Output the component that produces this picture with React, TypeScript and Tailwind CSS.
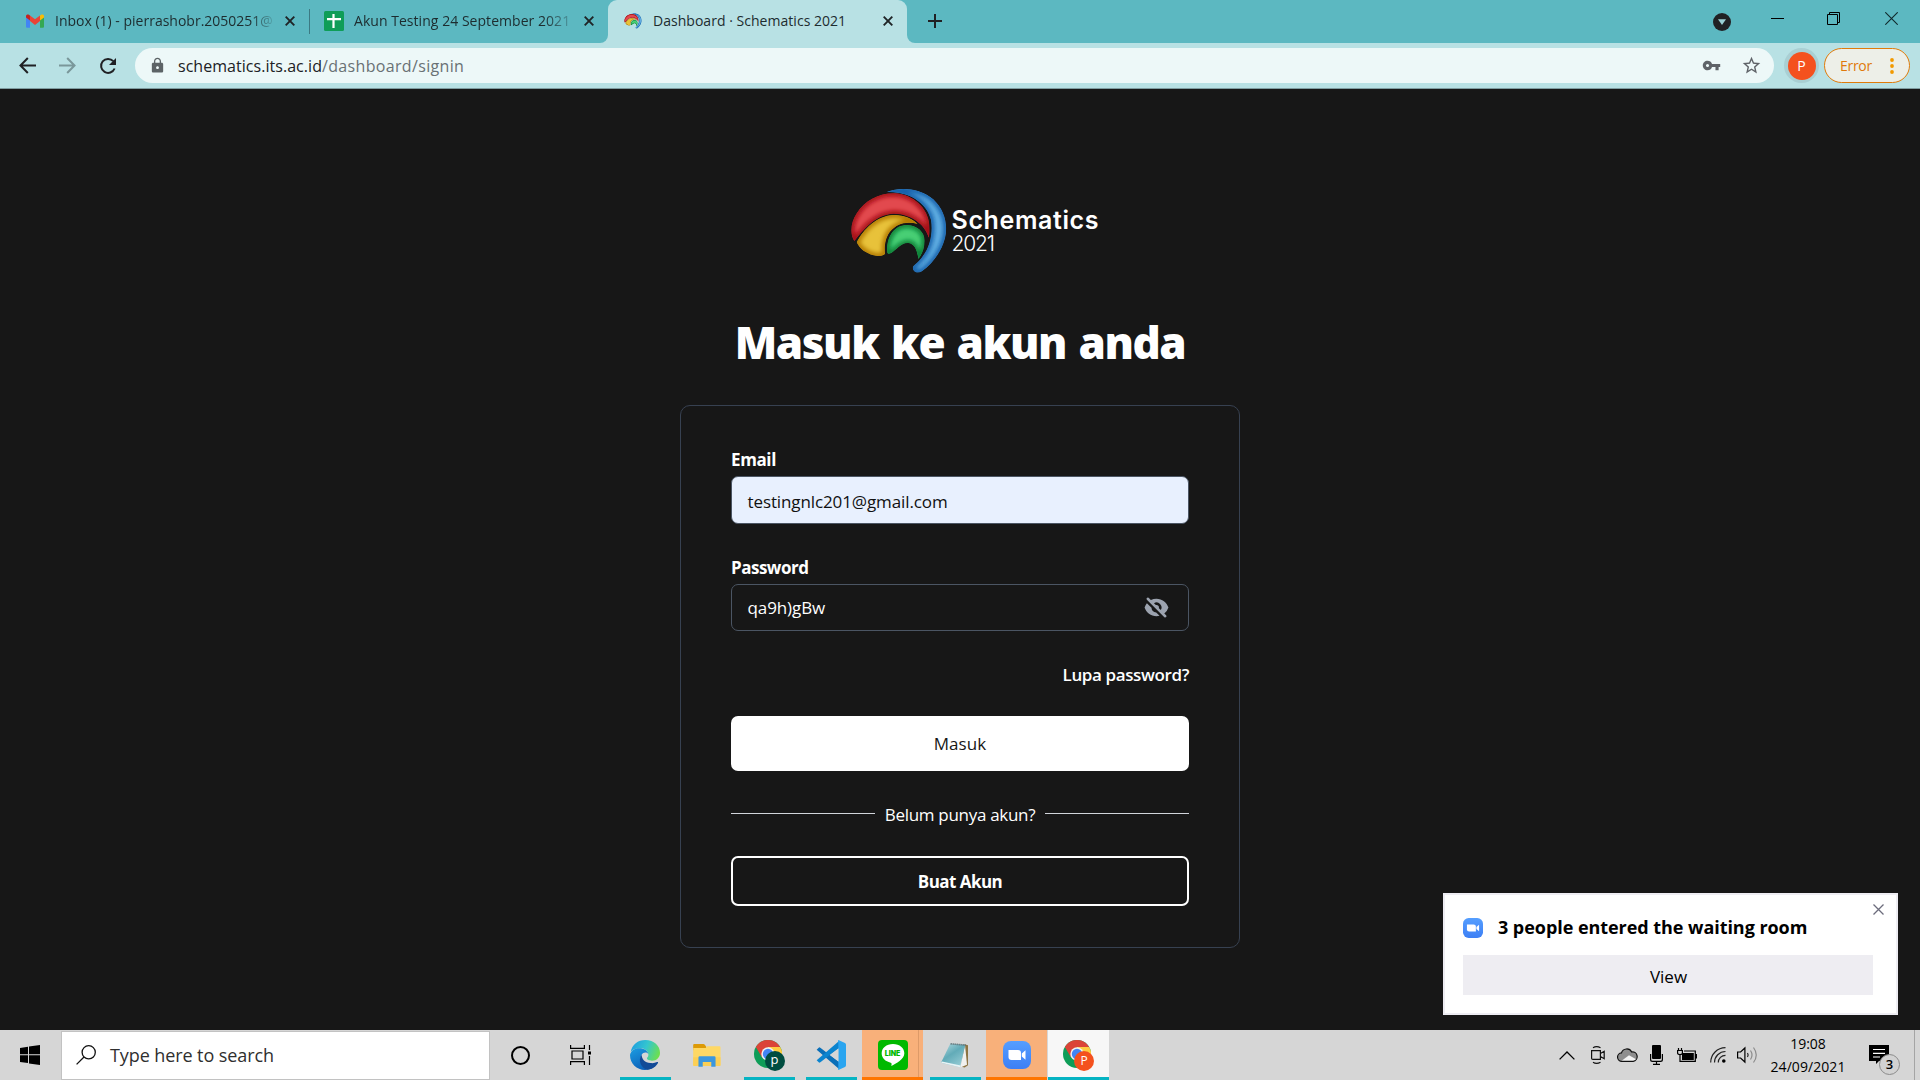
import React from "react";
import { HiEyeOff } from "react-icons/hi";
import { MdLock, MdStarBorder, MdVpnKey } from "react-icons/md";

function SchematicsMark({ id, className }: { id: string; className: string }) {
  const parts = [
    {
      key: "blue",
      light: "#62ade2",
      dark: "#1262ac",
      d: "M170 66C208 50 272 53 310 88C344 120 355 165 345 205C335 245 306 283 276 304C262 313 246 305 249 291C252 283 265 278 277 260C300 232 309 190 303 150C293 108 250 64 170 66Z",
    },
    {
      key: "red",
      light: "#e2494e",
      dark: "#a30a12",
      d: "M73 213C60 195 60 160 80 130C105 90 150 68 195 70C250 73 295 115 298 165C299 180 299 195 296 203C288 168 245 130 190 131C138 135 108 170 73 213Z",
    },
    {
      key: "yellow",
      light: "#e8c23a",
      dark: "#b37a06",
      d: "M80 217C100 178 140 137 190 135C220 134 248 146 263 162C230 152 200 161 180 185C165 205 163 230 165 251C161 258 145 260 130 256C108 250 90 238 80 217Z",
    },
    {
      key: "green",
      light: "#48cf75",
      dark: "#0c8237",
      d: "M172 248C168 215 182 170 225 165C260 163 284 185 284 212C284 235 275 255 265 267C262 245 255 221 235 219C212 218 200 240 182 250C177 252 173 251 172 248Z",
    },
  ];
  return (
    <svg viewBox="60 52 294 262" className={className}>
      <defs>
        <filter id={`${id}-soft`} x="-20%" y="-20%" width="140%" height="140%">
          <feGaussianBlur stdDeviation="6" />
        </filter>
        {parts.map((p) => (
          <clipPath key={p.key} id={`${id}-${p.key}`}>
            <path d={p.d} />
          </clipPath>
        ))}
      </defs>
      {parts.map((p) => (
        <g key={p.key} clipPath={`url(#${id}-${p.key})`}>
          <path d={p.d} fill={p.light} />
          <path d={p.d} fill="none" stroke={p.dark} strokeWidth="18" filter={`url(#${id}-soft)`} />
        </g>
      ))}
    </svg>
  );
}

function GmailIcon() {
  return (
    <svg viewBox="0 0 18 14" className="h-3.5 w-[18px] shrink-0">
      <path d="M0 3v9.5c0 .8.6 1.3 1.3 1.3H4V5.5z" fill="#4285f4" />
      <path d="M18 3v9.5c0 .8-.6 1.3-1.3 1.3H14V5.5z" fill="#34a853" />
      <path d="M4 1.5v5.6l5 3.8 5-3.8V1.5L9 5.3z" fill="#ea4335" />
      <path d="M0 2v1.4l4 3.2V1.5l-.8-.6C1.800-.2 0 .6 0 2z" fill="#c5221f" />
      <path d="M18 2v1.400l-4 3.200V1.500l.8-.6C16.200-.2 18 .6 18 2z" fill="#fbbc04" />
    </svg>
  );
}

function SheetIcon() {
  return (
    <svg viewBox="0 0 20 20" className="size-5 shrink-0">
      <rect width="20" height="20" rx="1.5" fill="#0f9d58" />
      <path d="M9.500 3v14M3 8.200h14" stroke="#fff" strokeWidth="2.200" />
    </svg>
  );
}

function CloseX({ className }: { className: string }) {
  return (
    <svg viewBox="0 0 10 10" className={className}>
      <path d="M.7.7l8.600 8.600M9.300.7L.7 9.300" stroke="currentColor" strokeWidth="1.900" />
    </svg>
  );
}

function TabStrip() {
  return (
    <div className="flex h-[43px] bg-[#5cb8c1] text-sm text-[#1d2c2f]">
      <div className="flex w-[309px] items-center pb-0.5 pl-[26px]">
        <GmailIcon />
        <span className="ml-[11px] w-[221px] whitespace-nowrap [mask-image:linear-gradient(to_right,black_195px,transparent_222px)]">
          Inbox (1) - pierrashobr.2050251@
        </span>
        <CloseX className="ml-[9px] size-2.5 shrink-0 text-[#1f2426]" />
      </div>
      <div className="mt-[9px] h-[25px] w-px bg-[#3c7a83]" />
      <div className="flex w-[290px] items-center pb-0.5 pl-3.5">
        <SheetIcon />
        <span className="ml-2.5 w-[219px] whitespace-nowrap tracking-[0.04px] [mask-image:linear-gradient(to_right,black_190px,transparent_224px)]">
          Akun Testing 24 September 2021
        </span>
        <CloseX className="ml-[11px] size-2.5 shrink-0 text-[#1f2426]" />
      </div>
      <div className="size-2 self-end bg-[#b8e1e4]">
        <div className="size-full rounded-br-lg bg-[#5cb8c1]" />
      </div>
      <div className="flex w-[299px] items-center rounded-t-[9px] bg-[#b8e1e4] pb-0.5 pl-4">
        <SchematicsMark id="tab" className="h-4 w-[18px] shrink-0" />
        <span className="ml-[11px] w-[230px] whitespace-nowrap tracking-[0.03px]">Dashboard · Schematics 2021</span>
        <CloseX className="size-2.5 shrink-0 text-[#1f2426]" />
      </div>
      <div className="size-2 self-end bg-[#b8e1e4]">
        <div className="size-full rounded-bl-lg bg-[#5cb8c1]" />
      </div>
      <svg viewBox="0 0 14 14" className="mt-3.5 ml-[13px] size-3.5 text-[#202124]">
        <path d="M7 0v14M0 7h14" stroke="currentColor" strokeWidth="2" />
      </svg>
      <div className="ml-auto flex pr-[22px]">
        <svg viewBox="0 0 18 18" className="mt-[13px] size-[18px]">
          <circle cx="9" cy="9" r="9" fill="#202124" />
          <path d="M5 6.200h8L9 12z" fill="#9ad0d5" />
        </svg>
        <div className="mt-[18px] ml-10 h-px w-[13px] bg-black" />
        <svg viewBox="0 0 13 13" className="mt-3 ml-[43px] size-[13px]">
          <path d="M.5 2.500h10v10H.5zM2.500 2.500v-2h10v10h-2" fill="none" stroke="#000" />
        </svg>
        <svg viewBox="0 0 13 13" className="mt-3 ml-[45px] size-[13px]">
          <path d="M.3.3l12.400 12.400M12.700.3L.3 12.700" stroke="#10292c" strokeWidth="1.100" />
        </svg>
      </div>
    </div>
  );
}

function Toolbar() {
  return (
    <div className="flex h-[46px] items-center border-b border-[#7f9da1] bg-[#b8e1e4]">
      <svg viewBox="0 0 16 16" className="ml-[19px] size-[17px] text-[#202124]">
        <path d="M16 8H1.500M8.300 1L1.400 8l6.900 7" fill="none" stroke="currentColor" strokeWidth="1.900" />
      </svg>
      <svg viewBox="0 0 16 16" className="ml-[23px] size-[17px] text-[#7a979a]">
        <path d="M0 8h14.500M7.700 1l6.900 7-6.900 7" fill="none" stroke="currentColor" strokeWidth="1.900" />
      </svg>
      <svg viewBox="0 0 18 18" className="ml-[23px] size-[18px] text-[#202124]">
        <path d="M15.600 11.500A7 7 0 1 1 14.300 4.200" fill="none" stroke="currentColor" strokeWidth="2" />
        <path d="M17 1v7h-7z" fill="currentColor" />
      </svg>
      <div className="ml-[18px] flex h-[35px] w-[1639px] items-center rounded-full bg-[#edf8f8] pl-3.5">
        <MdLock className="size-[17px] text-[#5c6366]" />
        <div className="ml-3 whitespace-nowrap">
          <span className="tracking-[0.04px] text-[#202124]">schematics.its.ac.id</span>
          <span className="tracking-[0.34px] text-[#697174]">/dashboard/signin</span>
        </div>
        <MdVpnKey className="ml-auto size-[19px] text-[#5f6368]" />
        <MdStarBorder className="mr-3 ml-5 size-[21px] text-[#5f6368]" />
      </div>
      <div className="ml-2.5 flex size-[35px] items-center justify-center rounded-full bg-[#a9cfd3]">
        <div className="flex size-7 items-center justify-center rounded-full bg-[#f4511e] text-sm text-white">P</div>
      </div>
      <div className="ml-[5px] flex h-[35px] w-[86px] items-center rounded-full border-[1.5px] border-[#e07b0a] bg-[#edefe8] pl-[15px] text-sm tracking-[-0.3px] text-[#e0790b]">
        Error
        <svg viewBox="0 0 4 16" className="ml-[18px] h-4 w-1">
          <circle cx="2" cy="2" r="1.900" fill="#f29900" />
          <circle cx="2" cy="8" r="1.900" fill="#f29900" />
          <circle cx="2" cy="14" r="1.900" fill="#f29900" />
        </svg>
      </div>
    </div>
  );
}

function SignIn() {
  return (
    <main className="flex h-[941px] flex-col items-center bg-[#171717] text-[17px] text-white">
      <div className="mt-[98px] ml-[30px] flex h-[88px] w-[250px]">
        <SchematicsMark id="logo" className="h-[88px] w-[98px] shrink-0" />
        <div className="ml-[3.5px] flex flex-col pt-5 font-['Inter']">
          <span className="text-[25px] leading-[26px] font-semibold tracking-[0.62px]">Schematics</span>
          <span className="text-[21px] leading-[22px] font-light tracking-[-1.2px]">2021</span>
        </div>
      </div>
      <h1 className="mt-[37px] text-[44px] leading-[60px] font-extrabold tracking-[-1.45px] [word-spacing:2.3px]">
        Masuk ke akun anda
      </h1>
      <section className="mt-[33px] h-[543px] w-[560px] rounded-[10px] border border-[#374151] px-[50px] pt-10">
        <label className="block h-[26px] pt-px leading-[26px] font-bold tracking-[-0.37px]">Email</label>
        <div className="mt-1 flex h-12 items-center rounded-[7px] border border-[#4b5563] bg-[#e8f0fe] pt-[3px] pl-[15.5px] tracking-[-0.11px] text-[#111]">
          testingnlc201@gmail.com
        </div>
        <label className="mt-[30px] block h-[27px] leading-[27px] font-bold tracking-[-0.5px]">Password</label>
        <div className="mt-[3px] flex h-[47px] items-center justify-between rounded-[7px] border border-[#4b5563] pr-[19px] pl-[15.5px]">
          <span className="pt-px tracking-[-0.1px]">qa9h)gBw</span>
          <HiEyeOff className="size-[25px] text-[#9ca3af]" />
        </div>
        <a className="mt-[30px] block h-[27px] text-right leading-[27px] font-semibold tracking-[-0.38px]">Lupa password?</a>
        <button className="mt-7 block h-[55px] w-full rounded-[7px] bg-white pt-px font-medium tracking-[0.1px] text-[#171717]">
          Masuk
        </button>
        <div className="mt-[29px] flex h-[26px] items-center gap-2.5 tracking-[-0.31px]">
          <div className="h-px flex-1 bg-[#d1d5db]" />
          <span className="pt-1 leading-[26px]">Belum punya akun?</span>
          <div className="h-px flex-1 bg-[#d1d5db]" />
        </div>
        <button className="mt-[30px] block h-[50px] w-full rounded-[7px] border-2 border-white pt-0.5 font-bold tracking-[-0.55px]">
          Buat Akun
        </button>
      </section>
    </main>
  );
}

function ZoomIcon({ id, className }: { id: string; className: string }) {
  return (
    <svg viewBox="0 0 28 28" className={className}>
      <defs>
        <linearGradient id={id} x1="0" y1="0" x2="0" y2="1">
          <stop offset="0" stopColor="#559eff" />
          <stop offset="1" stopColor="#3d7ff5" />
        </linearGradient>
      </defs>
      <rect width="28" height="28" rx="8" fill={`url(#${id})`} />
      <path d="M5.500 9h9.500a3 3 0 0 1 3 3v7H8.500a3 3 0 0 1-3-3z" fill="#fff" />
      <path d="M18.800 12.500l3.700-3.200v9.400l-3.700-3.200z" fill="#fff" />
    </svg>
  );
}

function ZoomToast() {
  return (
    <aside className="absolute top-[893px] left-[1443px] h-[122px] w-[455px] border-2 border-[#eeedf3] bg-white px-[18px] text-black">
      <svg viewBox="0 0 11 11" className="absolute top-[8.5px] right-3 size-[11px]">
        <path d="M.5.500l10 10M10.500.5l-10 10" stroke="#6c6c7c" strokeWidth="1.300" />
      </svg>
      <div className="mt-[19px] flex h-7 items-center">
        <ZoomIcon id="zoom-toast" className="size-5" />
        <span className="ml-[15px] pb-0.5 text-lg leading-[26px] font-bold tracking-[-0.05px]">
          3 people entered the waiting room
        </span>
      </div>
      <button className="mt-[13px] block h-10 w-[410px] bg-[#eeedf2] pt-[3px] pl-px text-[17px]">View</button>
    </aside>
  );
}

function EdgeIcon() {
  return (
    <svg viewBox="0 0 90 90" className="size-[30px]">
      <defs>
        <linearGradient id="edge-top" x1="0" y1="0.300" x2="1" y2="0.600">
          <stop offset="0" stopColor="#1f9fe0" />
          <stop offset=".5" stopColor="#34c6cf" />
          <stop offset="1" stopColor="#6ee04c" />
        </linearGradient>
        <linearGradient id="edge-left" x1="0" y1="0" x2=".6" y2="1">
          <stop offset="0" stopColor="#1b9de2" />
          <stop offset="1" stopColor="#0b5cb5" />
        </linearGradient>
      </defs>
      <path d="M2 36C6 14 24 0 46 0c26 0 44 18 44 38 0 14-10 24-24 24-10 0-16-4-15-8 2-3 5-6 4-12C53 30 40 24 27 25 14 26 6 31 2 36z" fill="url(#edge-top)" />
      <path d="M0 45C2 33 14 25 28 25c14 0 25 7 27 17-5-6-15-6-20 2-6 10-2 24 9 32 10 7 24 6 34 0C70 85 58 90 45 90 20 90 0 71 0 45z" fill="url(#edge-left)" />
      <path d="M35 44c-6 8-7 18-3 28 4 9 12 16 20 17 14-1 26-9 32-20 1-3-1-4-3-3-6 3-12 4-20 3-16-1-26-12-26-25z" fill="#124a97" />
    </svg>
  );
}

function FolderIcon() {
  return (
    <svg viewBox="0 0 84 70" className="h-[23px] w-7">
      <path d="M0 3q0-3 3-3h28q3 0 5 3l4 6v10H0z" fill="#dd9a06" />
      <path d="M0 12h38l4-5h38q3 0 3 3v54q0 3-3 3H3q-3 0-3-3z" fill="#fed865" />
      <path d="M0 40h83v24q0 3-3 3H3q-3 0-3-3z" fill="#fccf55" />
      <path d="M16 69V41q0-4 4-4h44q4 0 4 4v28H55V55H29v14z" fill="#3c97de" />
    </svg>
  );
}

function ChromeIcon({ letter, badge }: { letter: string; badge: "green" | "orange" }) {
  return (
    <div className="relative h-8 w-[31px]">
      <svg viewBox="0 0 84 84" className="mt-px size-7">
        <circle cx="42" cy="42" r="42" fill="#0f9d58" />
        <path d="M42 84A42 42 0 0 0 78.400 21H42z" fill="#ffcd40" />
        <path d="M42 21h36.400A42 42 0 0 0 5.600 21l18 31z" fill="#db4437" />
        <circle cx="42" cy="42" r="20" fill="#f1f1f1" />
        <circle cx="42" cy="42" r="15.500" fill="#4285f4" />
      </svg>
      <span
        className={
          badge === "green"
            ? "absolute right-0 bottom-0 flex size-5 items-center justify-center rounded-full bg-[#004d40] pb-0.5 text-[13px] text-white"
            : "absolute right-0 bottom-0 flex size-5 items-center justify-center rounded-full bg-[#f4511e] text-xs text-white"
        }
      >
        {letter}
      </span>
    </div>
  );
}

function CodeIcon() {
  return (
    <svg viewBox="0 0 90 90" className="size-[30px]">
      <path d="M2 29l6-6q2-2 5 0l57 44v21z" fill="#0a6fb8" />
      <path d="M2 61l6 6q2 2 5 0l57-44V2z" fill="#0b84cf" />
      <path d="M67 0l20 9q3 2 3 5v62q0 3-3 5l-20 9q-2-3 0-6V6q-2-3 0-6z" fill="#2aa5f0" />
      <path d="M67 26v38L42 45z" fill="#d6d6d6" />
    </svg>
  );
}

function LineIcon() {
  return (
    <div className="relative size-[30px]">
      <svg viewBox="0 0 90 90" className="size-full">
        <rect width="90" height="90" rx="12" fill="#00b900" />
        <path d="M45 12c-20 0-34 12-34 28 0 14 11 25 27 28 4 1 3 4 2 10 14-7 39-20 39-38 0-16-14-28-34-28z" fill="#fff" />
      </svg>
      <span className="absolute inset-x-0 top-[9px] text-center font-['Inter'] text-[7px] leading-[9px] font-black tracking-[-0.1px] text-[#00b900]">
        LINE
      </span>
    </div>
  );
}

function NotepadIcon() {
  return (
    <svg viewBox="0 0 84 80" className="h-[27px] w-7">
      <defs>
        <linearGradient id="note" x1="0" y1="0" x2=".7" y2="1">
          <stop offset="0" stopColor="#b8dde2" />
          <stop offset=".5" stopColor="#62abb8" />
          <stop offset="1" stopColor="#94cbd4" />
        </linearGradient>
      </defs>
      <path d="M70 6l11 3v60l-10 7-10-2z" fill="#8d7442" />
      <path d="M72 8l6 60-20 8z" fill="#f1f1ef" />
      <path d="M28 4l45 4-16 67L0 62z" fill="url(#note)" />
      <path d="M0 62l57 13 2-5L3 58z" fill="#e8f3f5" />
      <path d="M29 5l47 4" stroke="#5d6468" strokeWidth="5" strokeDasharray="3 3" />
    </svg>
  );
}

function TaskSlot({
  tone,
  stacked,
  children,
}: {
  tone: "open" | "none" | "alert" | "active";
  stacked?: boolean;
  children: React.ReactNode;
}) {
  const outer = {
    open: "flex h-[50px] w-[62px] flex-col items-center",
    none: "flex h-[50px] w-[62px] flex-col items-center",
    alert: "relative flex h-[50px] w-[61px] mr-px flex-col items-center bg-[#f8b07a]",
    active: "flex h-[50px] w-[61px] mr-px flex-col items-center bg-[#f7f7f7]",
  }[tone];
  const bar = {
    open: "h-[3px] w-[51px] bg-[#06b4c3]",
    none: "h-[3px] w-[51px]",
    alert: "h-[3px] w-full bg-[#ff7500]",
    active: "h-[3px] w-full bg-[#06b4c3]",
  }[tone];
  return (
    <div className={outer}>
      <div className="flex h-[47px] items-center pt-[3px]">{children}</div>
      <div className={bar} />
      {stacked && <div className="absolute top-0 right-1 h-[47px] w-px bg-[#dd9a68]" />}
    </div>
  );
}

function Tray() {
  return (
    <div className="ml-auto flex items-center text-black">
      <svg viewBox="0 0 16 9" className="h-[9px] w-4">
        <path d="M.6 8.400L8 1l7.400 7.400" fill="none" stroke="#000" strokeWidth="1.300" />
      </svg>
      <svg viewBox="0 0 14 18" className="ml-4 h-[18px] w-3.5">
        <path d="M.6 4.600h8.800v8.800H1.800a1.200 1.200 0 0 1-1.200-1.200zM9.400 7.500l3.800-2.200v7.400l-3.800-2.200M2 1.800Q5.500-.4 9.500 1.800M2 16.200q3.500 2.200 7.500 0" fill="none" stroke="#111" strokeWidth="1.200" />
      </svg>
      <svg viewBox="0 0 21 14" className="ml-3 h-3.5 w-[21px]">
        <path d="M5 13.300a4.200 4.200 0 0 1-.5-8.400A5.500 5.500 0 0 1 14.700 4a4.700 4.700 0 0 1 1.500 9.300z" fill="#8e8e8e" />
        <path d="M4 13.300l8-6 8 4.500-3.500 1.500z" fill="#f4f4f4" />
        <path d="M5 13.300a4.200 4.200 0 0 1-.5-8.400A5.500 5.500 0 0 1 14.700 4a4.700 4.700 0 0 1 1.500 9.300z" fill="none" stroke="#111" strokeWidth="1.200" />
      </svg>
      <svg viewBox="0 0 13 20" className="ml-3 h-5 w-[13px]">
        <rect x="2" width="9" height="14" rx="1" fill="#000" />
        <path d="M.6 9v5.500q0 1.900 1.900 1.900h8q1.900 0 1.900-1.900V9M6.500 16.400V19.400M3 19.400h7" fill="none" stroke="#000" strokeWidth="1.200" />
      </svg>
      <svg viewBox="0 0 20 14" className="ml-3.5 h-3.5 w-5">
        <path d="M1.500 0v2.500M4.500 0v2.500M.6 2.500h4.800V5Q5.400 6.500 3 6.500.6 6.500.6 5zM3 6.500v6.900h15.300V3H7M18.300 6.500h1.100v3.500h-1.100" fill="none" stroke="#000" strokeWidth="1.200" />
        <path d="M5 5h11.800v7H5z" fill="#000" />
      </svg>
      <svg viewBox="0 0 16 16" className="ml-[13px] size-4">
        <path d="M.7 15.500A14.800 14.800 0 0 1 15.500.7M4.500 15.500a11 11 0 0 1 11-11M8.300 15.500a7.200 7.200 0 0 1 7.200-7.200" fill="none" stroke="#222" strokeWidth="1.200" />
        <circle cx="13.800" cy="14" r="1.800" fill="#000" />
      </svg>
      <svg viewBox="0 0 21 18" className="ml-[11px] h-[18px] w-[21px]">
        <path d="M.6 6h3l4.300-4v14l-4.300-4h-3z" fill="none" stroke="#000" strokeWidth="1.200" />
        <path d="M10.500 7q1.300 2 0 4" fill="none" stroke="#222" strokeWidth="1.200" />
        <path d="M13.500 4.500q3 4.500 0 9M16.500 1.500q5.500 7.500 0 15" fill="none" stroke="#8b8b8b" strokeWidth="1.200" />
      </svg>
      <div className="ml-3 flex w-[76px] flex-col items-center text-sm leading-[23px] whitespace-nowrap">
        <span>19:08</span>
        <span className="tracking-[0.07px]">24/09/2021</span>
      </div>
      <div className="relative mt-2.5 ml-[23px] h-[30px] w-[31px]">
        <svg viewBox="0 0 20 20" className="size-5">
          <path d="M0 0h20v16H10l-3 3v-3H0z" fill="#000" />
          <path d="M4 4.500h12M4 8.300h12M4 12h7" stroke="#fff" strokeWidth="1.200" />
        </svg>
        <span className="absolute right-0 bottom-0 flex size-[21px] items-center justify-center rounded-full border border-[#8b8b8b] bg-[#d2d2d2] text-[13px] font-semibold">
          3
        </span>
      </div>
      <div className="ml-3.5 h-[50px] w-1.5 border-l border-[#a5a5a5]" />
    </div>
  );
}

function Taskbar() {
  return (
    <footer className="flex h-[50px] items-center bg-[#d6d6d6]">
      <svg viewBox="0 0 60 60" className="ml-5 size-5">
        <path d="M0 9l24-4v23H0zM27 4.500L60 0v28H27zM0 31h24v23L0 51zM27 31h33v29l-33-4.500z" fill="#000" />
      </svg>
      <div className="ml-[21px] flex h-[49px] w-[429px] items-center border border-[#c2c2c2] bg-white pl-3.5">
        <svg viewBox="0 0 20 20" className="size-5">
          <circle cx="12.700" cy="7.300" r="6.600" fill="none" stroke="#111" strokeWidth="1.300" />
          <path d="M8 12L.6 19.400" stroke="#111" strokeWidth="1.300" />
        </svg>
        <span className="ml-[14px] text-lg tracking-[-0.09px] text-[#2f2f2f]">Type here to search</span>
      </div>
      <div className="ml-[21px] size-[19px] rounded-full border-[2.500px] border-black" />
      <svg viewBox="0 0 22 20" className="ml-[40px] h-5 w-[22px]">
        <path d="M.6 0v3.400h13.800V0M2 6h11v8H2zM.6 20v-3.400h13.800V20M19.500 0v5M19.500 11v9" fill="none" stroke="#000" strokeWidth="1.200" />
        <path d="M18 6.500h3v3h-3z" fill="#000" />
      </svg>
      <div className="ml-[22px] flex">
        <TaskSlot tone="open"><EdgeIcon /></TaskSlot>
        <TaskSlot tone="none"><FolderIcon /></TaskSlot>
        <TaskSlot tone="open"><ChromeIcon letter="p" badge="green" /></TaskSlot>
        <TaskSlot tone="open"><CodeIcon /></TaskSlot>
        <TaskSlot tone="alert" stacked><LineIcon /></TaskSlot>
        <TaskSlot tone="open"><NotepadIcon /></TaskSlot>
        <TaskSlot tone="alert"><ZoomIcon id="zoom-task" className="size-7" /></TaskSlot>
        <TaskSlot tone="active"><ChromeIcon letter="P" badge="orange" /></TaskSlot>
      </div>
      <Tray />
    </footer>
  );
}

export default function App() {
  return (
    <div className="relative h-[1080px] w-[1920px] overflow-hidden bg-[#171717] font-['Open_Sans','Noto_Sans',sans-serif]">
      <TabStrip />
      <Toolbar />
      <SignIn />
      <Taskbar />
      <ZoomToast />
    </div>
  );
}
